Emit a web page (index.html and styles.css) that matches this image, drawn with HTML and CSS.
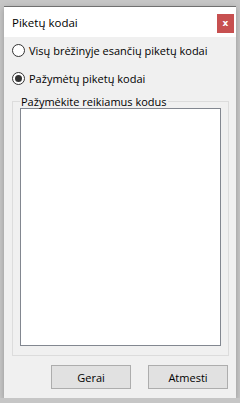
FILE: index.html
```html
<!DOCTYPE html>
<html lang="lt">
  <head>
    <meta charset="UTF-8" />
    <meta name="viewport" content="width=device-width, initial-scale=1.0" />
    <title>Piketų kodai</title>
    <link rel="stylesheet" href="styles.css">
  </head>
  <body>
    <div class="dialog">
      <div class="titlebar">
        <span class="title">Piketų kodai</span>
        <button class="close" type="button">x</button>
      </div>

      <div class="content">
        <label class="radio">
          <span class="dot"></span>
          Visų brėžinyje esančių piketų kodai
        </label>
        <label class="radio checked">
          <span class="dot"></span>
          Pažymėtų piketų kodai
        </label>

        <fieldset class="group">
          <legend>Pažymėkite reikiamus kodus</legend>
          <div class="listbox"></div>
        </fieldset>

        <div class="actions">
          <button type="button" class="btn">Gerai</button>
          <button type="button" class="btn">Atmesti</button>
        </div>
      </div>
    </div>
  </body>
</html>
```

FILE: styles.css
```css
body {
  margin: 0;
  background-color: #c6c6c6;
  font-family: "Open Sans", "Noto Sans", sans-serif;
  font-size: 11px;
  color: #000;
}

.dialog {
  margin: 6px 4px 0;
  width: 232px;
  height: 391px;
  background: #f0f0f0;
  border-top: 1px solid #707070;
  box-shadow: 0 2px 6px rgba(0, 0, 0, 0.25);
  display: flex;
  flex-direction: column;
}

.titlebar {
  height: 30px;
  background: #ffffff;
  display: flex;
  align-items: center;
  justify-content: space-between;
  padding: 0 2px 0 8px;
}

.title {
  font-size: 11.5px;
  color: #000;
}

.close {
  width: 17px;
  height: 19px;
  margin-top: 2px;
  border: none;
  background: #c75050;
  color: #fff;
  font-family: "DejaVu Sans", sans-serif;
  font-weight: bold;
  font-size: 9px;
  padding: 0;
}

.content {
  padding: 5px 8px 0;
  flex: 1;
  display: flex;
  flex-direction: column;
}

.radio {
  display: flex;
  align-items: center;
  gap: 4px;
  height: 16px;
  margin-bottom: 12px;
  white-space: nowrap;
}

.dot {
  width: 11px;
  height: 11px;
  border: 1px solid #333;
  border-radius: 50%;
  background: #fff;
  position: relative;
  flex: none;
}

.checked .dot::after {
  content: "";
  position: absolute;
  left: 2px;
  top: 2px;
  width: 7px;
  height: 7px;
  border-radius: 50%;
  background: #333;
}

.group {
  margin: -3px 0 0;
  padding: 0 7px 9px 7px;
  border: 1px solid #dcdcdc;
  width: 217px;
  box-sizing: border-box;
}

.group legend {
  padding: 0 1px;
  margin-left: 0;
  line-height: 13px;
}

.listbox {
  height: 236px;
  background: #fff;
  border: 1px solid #828790;
}

.actions {
  display: flex;
  justify-content: flex-end;
  gap: 17px;
  margin-top: 9px;
  width: 216px;
}

.btn {
  width: 80px;
  height: 24px;
  background: #e1e1e1;
  border: 1px solid #adadad;
  font-family: "Open Sans", "Noto Sans", sans-serif;
  font-size: 11px;
  color: #000;
  padding: 0;
}
```
